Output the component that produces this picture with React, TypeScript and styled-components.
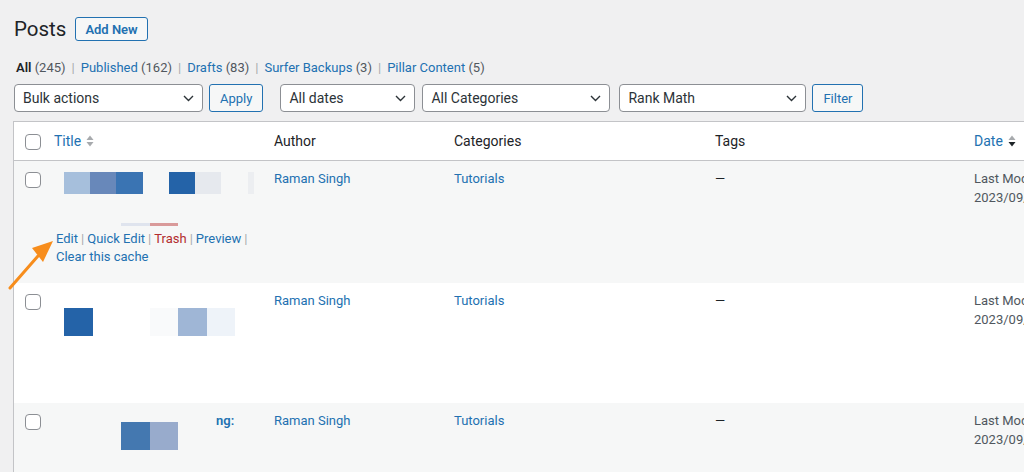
import * as React from 'react';
import styled, { createGlobalStyle } from 'styled-components';

const GlobalStyle = createGlobalStyle`
  html, body {
    margin: 0;
    padding: 0;
    background: #f0f0f1;
    overflow: hidden;
  }
  body {
    width: 1024px;
    height: 472px;
    font-family: Roboto, "Liberation Sans", sans-serif;
    font-size: 13px;
    color: #1d2327;
  }
`;

const Wrap = styled.div`
  position: relative;
  padding: 17px 0 0 14px;
  width: 1100px;
`;

const HeadRow = styled.div`
  display: flex;
  align-items: center;
  height: 24px;
`;

const Heading = styled.h1`
  margin: 0 9px 0 0;
  font-size: 20.5px;
  font-weight: 400;
  line-height: 24px;
  color: #1d2327;
`;

const OutlineButton = styled.button`
  height: ${p => p.$h || 24}px;
  padding: 0 ${p => p.$px || 9}px;
  margin-left: ${p => p.$ml || 0}px;
  border: 1px solid #2271b1;
  border-radius: 3px;
  background: #f6f7f7;
  color: #2271b1;
  font-family: inherit;
  font-size: 13px;
  font-weight: ${p => p.$bold ? 600 : 400};
`;

const SubSub = styled.div`
  margin: 14px 0 0 2px;
  line-height: 26px;
  color: #50575e;
  font-size: 13px;
`;

const Current = styled.b`
  color: #1d2327;
  font-weight: 600;
`;

const Link = styled.a`
  color: #2271b1;
  text-decoration: none;
  font-weight: ${p => p.$bold ? 600 : 400};
`;

const Sep = styled.span`
  color: #a7aaad;
  margin: 0 ${p => p.$gap ?? 6}px;
`;

const Filters = styled.div`
  display: flex;
  align-items: center;
  margin-top: 3px;
  height: 28px;
`;

const Select = styled.div`
  display: flex;
  align-items: center;
  justify-content: space-between;
  box-sizing: border-box;
  width: ${p => p.$w}px;
  height: 28px;
  margin-left: ${p => p.$ml || 0}px;
  padding: 0 8px 0 8px;
  border: 1px solid #8c8f94;
  border-radius: 4px;
  background: #fff;
  font-size: 14px;
  color: #2c3338;
`;

const Table = styled.div`
  margin: 9px 0 0 -1px;
  width: 1090px;
  border: 1px solid #c3c4c7;
  border-right: none;
  background: #fff;
`;

const Row = styled.div`
  display: grid;
  grid-template-columns: 30px 220px 180px 261px 259px 140px;
  height: ${p => p.$h}px;
  background: ${p => p.$alt ? '#f6f7f7' : '#fff'};
  border-bottom: ${p => p.$head ? '1px solid #c3c4c7' : 'none'};
  box-sizing: border-box;
`;

const Cell = styled.div`
  padding: ${p => p.$head ? '10px' : '8px'} 10px 0 10px;
  line-height: 19px;
  font-size: ${p => p.$head ? 14 : 13}px;
  color: ${p => p.$muted ? '#50575e' : '#1d2327'};
  white-space: nowrap;
`;

const CheckCell = styled.div`
  padding: ${p => p.$head ? '12px' : '11px'} 0 0 11px;
`;

const Check = styled.span`
  display: block;
  width: 16px;
  height: 16px;
  box-sizing: border-box;
  border: 1px solid #8c8f94;
  border-radius: 4px;
  background: #fff;
`;

const SortIcon = styled.svg`
  margin-left: 5px;
  vertical-align: -1px;
`;

const Redact = styled.div`
  display: flex;
  margin: ${p => p.$mt || 0}px 0 0 ${p => p.$ml || 0}px;
`;

const Block = styled.span`
  display: block;
  width: ${p => p.$w || 28.5}px;
  height: ${p => p.$h || 22}px;
  background: ${p => p.$c};
`;

const TitleLine = styled.div`
  display: flex;
  align-items: flex-start;
`;

const Actions = styled.div`
  margin: 4px 0 0 2px;
  line-height: 18px;
`;

const Trash = styled.a`
  color: #b32d2e;
  text-decoration: none;
`;

const Arrow = styled.svg`
  position: absolute;
  left: 0;
  top: 230px;
`;

const Chevron = () => (
  <svg width="11" height="7" viewBox="0 0 11 7">
    <path d="M1 1 L5.5 5.5 L10 1" fill="none" stroke="#2c3338" strokeWidth="1.4" />
  </svg>
);

const Sort = ({ active }: { active?: boolean }) => (
  <SortIcon width="8" height="12" viewBox="0 0 8 12">
    <path d="M4 0.5 L7.5 5 L0.5 5 Z" fill="#a7aaad" />
    <path d="M4 11.5 L7.5 7 L0.5 7 Z" fill={active ? '#1d2327' : '#a7aaad'} />
  </SortIcon>
);

const Author = () => <Cell><Link>Raman Singh</Link></Cell>;
const Category = () => <Cell><Link>Tutorials</Link></Cell>;
const Tags = () => <Cell>—</Cell>;
const DateCell = () => (
  <Cell $muted>Last Modified<br />2023/09/12 at 10:14 am</Cell>
);

export default function App() {
  return (
    <Wrap>
      <GlobalStyle />
      <HeadRow>
        <Heading>Posts</Heading>
        <OutlineButton $bold>Add New</OutlineButton>
      </HeadRow>
      <SubSub>
        <Current>All</Current> (245)<Sep>|</Sep>
        <Link>Published</Link> (162)<Sep>|</Sep>
        <Link>Drafts</Link> (83)<Sep>|</Sep>
        <Link>Surfer Backups</Link> (3)<Sep>|</Sep>
        <Link>Pillar Content</Link> (5)
      </SubSub>
      <Filters>
        <Select $w={189}>Bulk actions<Chevron /></Select>
        <OutlineButton $h={28} $px={10} $ml={6}>Apply</OutlineButton>
        <Select $w={135} $ml={17}>All dates<Chevron /></Select>
        <Select $w={188} $ml={7}>All Categories<Chevron /></Select>
        <Select $w={187} $ml={9}>Rank Math<Chevron /></Select>
        <OutlineButton $h={28} $px={10} $ml={6}>Filter</OutlineButton>
      </Filters>

      <Table>
        <Row $h={39} $head>
          <CheckCell $head><Check /></CheckCell>
          <Cell $head><Link>Title</Link><Sort /></Cell>
          <Cell $head>Author</Cell>
          <Cell $head>Categories</Cell>
          <Cell $head>Tags</Cell>
          <Cell $head><Link>Date</Link><Sort active /></Cell>
        </Row>

        <Row $h={122} $alt>
          <CheckCell><Check /></CheckCell>
          <Cell>
            <Redact $mt={3} $ml={10}>
              <Block $c="#a6bfdc" />
              <Block $c="#6888ba" />
              <Block $c="#3a74b3" />
              <Block $c="transparent" />
              <Block $c="#2463a8" />
              <Block $c="#e6e9ee" />
              <Block $c="transparent" />
              <Block $c="#eceef1" $w={7} />
            </Redact>
            <Redact $mt={29} $ml={67}>
              <Block $c="#dfe4ee" $h={3} />
              <Block $c="#d99a9a" $h={3} />
            </Redact>
            <Actions>
              <Link>Edit</Link><Sep $gap={3}>|</Sep><Link>Quick Edit</Link><Sep $gap={3}>|</Sep>
              <Trash>Trash</Trash><Sep $gap={3}>|</Sep><Link>Preview</Link><Sep $gap={3}>|</Sep>
              <br />
              <Link>Clear this cache</Link>
            </Actions>
          </Cell>
          <Author />
          <Category />
          <Tags />
          <DateCell />
        </Row>

        <Row $h={120}>
          <CheckCell><Check /></CheckCell>
          <Cell>
            <Redact $mt={17} $ml={10}>
              <Block $c="#2463a8" $h={28} />
              <Block $c="transparent" $h={28} />
              <Block $c="transparent" $h={28} />
              <Block $c="#f9fafb" $h={28} />
              <Block $c="#9fb6d6" $h={28} />
              <Block $c="#eef3f9" $h={28} />
            </Redact>
          </Cell>
          <Author />
          <Category />
          <Tags />
          <DateCell />
        </Row>

        <Row $h={120} $alt>
          <CheckCell><Check /></CheckCell>
          <Cell>
            <TitleLine>
              <Redact $mt={11} $ml={67}>
                <Block $c="#4478b0" $h={28} />
                <Block $c="#98abcc" $h={28} />
              </Redact>
              <Link $bold style={{ marginLeft: 38 }}>ng:</Link>
            </TitleLine>
          </Cell>
          <Author />
          <Category />
          <Tags />
          <DateCell />
        </Row>
      </Table>

      <Arrow width="70" height="70" viewBox="0 0 70 70">
        <line x1="10" y1="58" x2="38" y2="26" stroke="#f78d1c" strokeWidth="3" strokeLinecap="round" />
        <path d="M53 11 L32 18 L43 32 Z" fill="#f78d1c" />
      </Arrow>
    </Wrap>
  );
}
